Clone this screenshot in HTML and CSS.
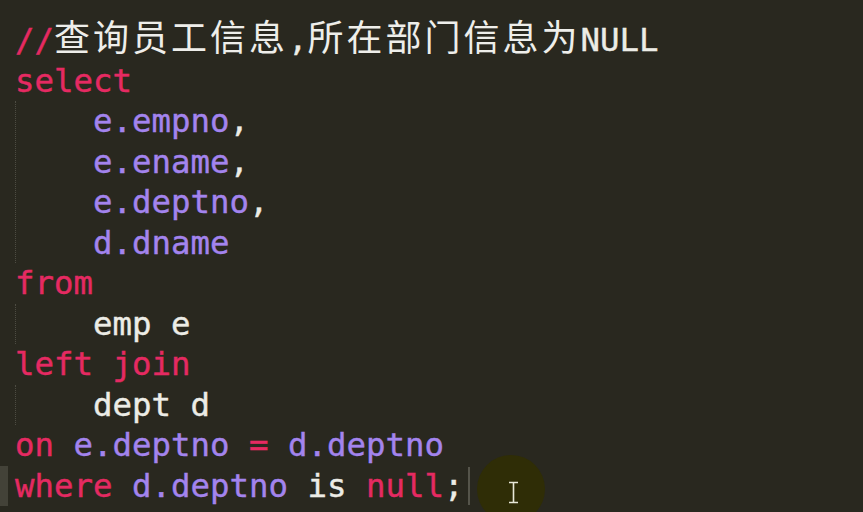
FILE: index.html
```html
<!DOCTYPE html>
<html lang="zh-CN">
<head>
<meta charset="utf-8">
<title>SQL</title>
<link rel="stylesheet" href="styles.css">
</head>
<body>
<div class="editor">
  <div class="line"><span class="kw">//</span><span class="cjk">查询员工信息</span>,<span class="cjk">所在部门信息为</span>NULL</div>
  <div class="line"><span class="kw">select</span></div>
  <div class="block">
    <div class="line"><span class="id">e.empno</span>,</div>
    <div class="line"><span class="id">e.ename</span>,</div>
    <div class="line"><span class="id">e.deptno</span>,</div>
    <div class="line"><span class="id">d.dname</span></div>
  </div>
  <div class="line"><span class="kw">from</span></div>
  <div class="block">
    <div class="line">emp e</div>
  </div>
  <div class="line"><span class="kw">left join</span></div>
  <div class="block">
    <div class="line">dept d</div>
  </div>
  <div class="line"><span class="kw">on</span> <span class="id">e.deptno</span> <span class="kw">=</span> <span class="id">d.deptno</span></div>
  <div class="line current"><span class="kw">where</span> <span class="id">d.deptno</span> is <span class="kw">null</span>;<span class="caret"></span></div>
</div>
<div class="mouse-halo"></div>
<div class="ibeam">
  <svg width="11" height="23" viewBox="0 0 11 23"><path d="M1 1.5h9M1 21.5h9M5.5 1.5v20" stroke="#e8e8d8" stroke-width="1.6" fill="none"/></svg>
</div>
</body>
</html>
```
FILE: styles.css
```css
html, body {
  margin: 0;
  padding: 0;
  background: #29281f;
  width: 863px;
  height: 512px;
  overflow: hidden;
}
.editor {
  padding-top: 20px;
  font-family: "DejaVu Sans Mono", "Noto Sans CJK SC", monospace;
  font-size: 32.4px;
  line-height: 40.5px;
  color: #ecece6;
  -webkit-text-stroke: 0.4px currentColor;
}
.line {
  height: 40.5px;
  padding-left: 15px;
  white-space: pre;
}
.block {
  margin-left: 15px;
  border-left: 1px dotted #4d4c42;
}
.block .line {
  padding-left: 77px;
}
.current {
  background: linear-gradient(to right, #434238 8px, transparent 8px);
}
.kw { color: #e52a62; }
.id { color: #a384ee; }
.cjk {
  font-family: "Noto Sans CJK SC", sans-serif;
  font-size: 36px;
  letter-spacing: 3px;
  line-height: 0;
  color: #eeeeea;
  -webkit-text-stroke: 0;
}
.caret {
  display: inline-block;
  width: 2px;
  height: 38px;
  margin-left: 4px;
  vertical-align: -8px;
  background: #55544a;
}
.mouse-halo {
  position: absolute;
  left: 477px;
  top: 455px;
  width: 68px;
  height: 68px;
  border-radius: 50%;
  background: #2f2d06;
}
.ibeam {
  position: absolute;
  left: 508px;
  top: 481px;
  width: 11px;
  height: 23px;
}
.ibeam svg { display: block; }
```
